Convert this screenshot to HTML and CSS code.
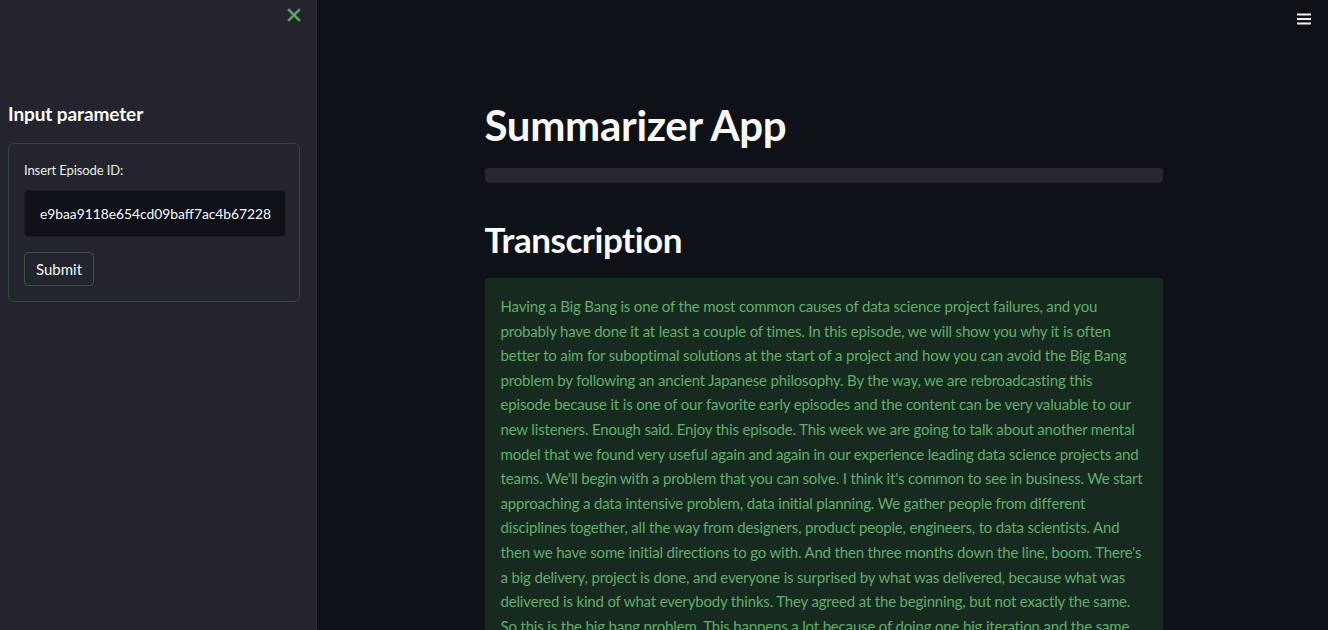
FILE: index.html
```html
<!DOCTYPE html>
<html lang="en">
<head>
<meta charset="utf-8">
<title>Summarizer App</title>
<link rel="stylesheet" href="styles.css">
</head>
<body>
<div class="app">
  <aside class="sidebar">
    <div class="sidebar-top">
      <button class="close-btn" aria-label="Close sidebar">
        <svg width="14" height="14" viewBox="0 0 14 14"><path d="M2 2 L12 12 M12 2 L2 12" stroke="#5a9e68" stroke-width="2.6" stroke-linecap="square"/></svg>
      </button>
    </div>
    <h3 class="side-title">Input parameter</h3>
    <form class="form">
      <label class="field-label">Insert Episode ID:</label>
      <div class="input">e9baa9118e654cd09baff7ac4b67228</div>
      <button type="button" class="submit">Submit</button>
    </form>
  </aside>
  <main class="main">
    <header class="topbar">
      <button class="menu-btn" aria-label="Menu">
        <svg width="14" height="12" viewBox="0 0 14 12"><path d="M0 1.5 H14 M0 6 H14 M0 10.5 H14" stroke="#f3f3f3" stroke-width="2"/></svg>
      </button>
    </header>
    <div class="block">
      <h1 class="title">Summarizer App</h1>
      <div class="progress"></div>
      <h2 class="subtitle">Transcription</h2>
      <div class="success">Having a Big Bang is one of the most common causes of data science project failures, and you<br>probably have done it at least a couple of times. In this episode, we will show you why it is often<br>better to aim for suboptimal solutions at the start of a project and how you can avoid the Big Bang<br>problem by following an ancient Japanese philosophy. By the way, we are rebroadcasting this<br>episode because it is one of our favorite early episodes and the content can be very valuable to our<br>new listeners. Enough said. Enjoy this episode. This week we are going to talk about another mental<br>model that we found very useful again and again in our experience leading data science projects and<br>teams. We'll begin with a problem that you can solve. I think it's common to see in business. We start<br>approaching a data intensive problem, data initial planning. We gather people from different<br>disciplines together, all the way from designers, product people, engineers, to data scientists. And<br>then we have some initial directions to go with. And then three months down the line, boom. There's<br>a big delivery, project is done, and everyone is surprised by what was delivered, because what was<br>delivered is kind of what everybody thinks. They agreed at the beginning, but not exactly the same.<br>So this is the big bang problem. This happens a lot because of doing one big iteration and the same<br>thing happens again and again.</div>
    </div>
  </main>
</div>
</body>
</html>
```

FILE: styles.css
```css
* { box-sizing: border-box; }
html, body {
  margin: 0;
  height: 100%;
  overflow: hidden;
}
body {
  background: #0e1117;
  font-family: Lato, "Open Sans", sans-serif;
  color: #fafafa;
}
.app {
  display: flex;
  height: 630px;
  overflow: hidden;
}
.sidebar {
  width: 317px;
  flex: 0 0 317px;
  background: #23242d;
  border-right: 1px solid #2c2d36;
  padding: 0 16px 0 8px;
}
.sidebar-top {
  display: flex;
  justify-content: flex-end;
  height: 96px;
  padding-top: 8px;
}
.close-btn, .menu-btn {
  background: none;
  border: none;
  padding: 0;
  cursor: pointer;
  display: flex;
}
.close-btn { margin-right: -1px; height: 16px; }
.side-title {
  margin: 0;
  font-size: 19px;
  font-weight: 700;
  line-height: 36px;
  letter-spacing: -0.1px;
  color: #fafafa;
}
.form {
  margin-top: 11px;
  border: 1px solid #2f4a36;
  border-radius: 6px;
  padding: 18px 13px 15px 15px;
  display: flex;
  flex-direction: column;
  align-items: flex-start;
}
.field-label {
  font-size: 13px;
  line-height: 16px;
  color: #e6f0e6;
  margin-bottom: 12px;
  letter-spacing: -0.1px;
}
.input {
  width: 100%;
  height: 47px;
  background: #0f1119;
  border: 1px solid #1b1d24;
  border-radius: 4px;
  display: flex;
  align-items: center;
  padding-left: 15px;
  font-size: 13.8px;
  color: #fafafa;
  white-space: nowrap;
}
.submit {
  margin-top: 15px;
  background: #23242d;
  border: 1px solid #36553d;
  border-radius: 4px;
  color: #fafafa;
  font-family: inherit;
  font-size: 15px;
  padding: 0 11px;
  height: 34px;
}
.main {
  flex: 1;
  display: flex;
  flex-direction: column;
  position: relative;
  min-width: 0;
}
.topbar {
  display: flex;
  justify-content: flex-end;
  height: 0;
}
.menu-btn {
  position: absolute;
  top: 13px;
  right: 17px;
}
.block {
  width: 678px;
  margin: 0 auto;
  padding-top: 96px;
  transform: translateX(1px);
}
.title {
  margin: 0;
  font-size: 42px;
  font-weight: 700;
  line-height: 58px;
  letter-spacing: -0.3px;
  color: #fafafa;
}
.progress {
  margin-top: 14px;
  height: 15px;
  background: #262730;
  border-radius: 3px;
}
.subtitle {
  margin: 34px 0 0;
  font-size: 35px;
  font-weight: 700;
  line-height: 44px;
  letter-spacing: -0.45px;
  color: #fafafa;
}
.success {
  margin-top: 17px;
  background: #172a1f;
  border-radius: 4px;
  padding: 16px 16px;
  color: #61ad6c;
  font-size: 15px;
  line-height: 24.6px;
  letter-spacing: -0.17px;
  white-space: nowrap;
}
```
